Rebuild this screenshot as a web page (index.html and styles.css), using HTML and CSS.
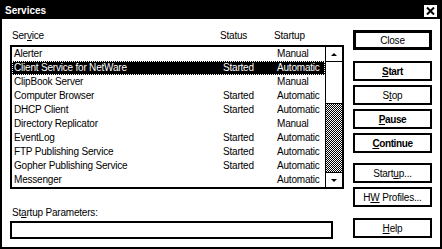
FILE: index.html
```html
<!DOCTYPE html>
<html lang="en">
<head>
    <meta charset="UTF-8">
    <meta name="viewport" content="width=device-width, initial-scale=1.0">
    <title>Services</title>
    <link rel="stylesheet" href="styles.css">
</head>
<body>
    <div class="window">
        <div class="titlebar">
            <span class="title">Services</span>
            <span class="close-box">
                <svg width="9" height="8" viewBox="0 0 9 8">
                    <path d="M1 0.5 L8 7.5 M8 0.5 L1 7.5" stroke="#000" stroke-width="2"/>
                </svg>
            </span>
        </div>

        <div class="content">
            <div class="main">
                <div class="header">
                    <span>Ser<u>v</u>ice</span>
                    <span>Status</span>
                    <span>Startup</span>
                </div>

                <div class="listbox">
                    <ul class="rows">
                        <li><span>Alerter</span><span></span><span>Manual</span></li>
                        <li class="selected"><span>Client Service for NetWare</span><span>Started</span><span>Automatic</span></li>
                        <li><span>ClipBook Server</span><span></span><span>Manual</span></li>
                        <li><span>Computer Browser</span><span>Started</span><span>Automatic</span></li>
                        <li><span>DHCP Client</span><span>Started</span><span>Automatic</span></li>
                        <li><span>Directory Replicator</span><span></span><span>Manual</span></li>
                        <li><span>EventLog</span><span>Started</span><span>Automatic</span></li>
                        <li><span>FTP Publishing Service</span><span>Started</span><span>Automatic</span></li>
                        <li><span>Gopher Publishing Service</span><span>Started</span><span>Automatic</span></li>
                        <li><span>Messenger</span><span></span><span>Automatic</span></li>
                    </ul>
                    <div class="scrollbar">
                        <div class="arrow"><span class="tri up"></span></div>
                        <div class="thumb"></div>
                        <div class="track"></div>
                        <div class="arrow down-box"><span class="tri down"></span></div>
                    </div>
                </div>

                <label class="param-label">St<u>a</u>rtup Parameters:</label>
                <div class="param-input"></div>
            </div>

            <div class="buttons">
                <button class="btn default">Close</button>
                <button class="btn bold first"><u>S</u>tart</button>
                <button class="btn">S<u>t</u>op</button>
                <button class="btn bold"><u>P</u>ause</button>
                <button class="btn bold"><u>C</u>ontinue</button>
                <button class="btn group">Start<u>u</u>p...</button>
                <button class="btn">H<u>W</u> Profiles...</button>
                <button class="btn last"><u>H</u>elp</button>
            </div>
        </div>
    </div>
</body>
</html>
```

FILE: styles.css
```css
body {
    margin: 0;
    padding: 0;
    background-color: #fff;
    font-family: 'Liberation Sans', Arial, sans-serif;
    font-size: 10px;
    letter-spacing: -0.2px;
    color: #000;
}

.window {
    width: 442px;
    height: 249px;
    box-sizing: border-box;
    border: 2px solid #000;
    background-color: #fff;
}

.titlebar {
    height: 17px;
    background-color: #000;
    color: #fff;
    display: flex;
    align-items: center;
    justify-content: space-between;
    padding: 0 3px 0 3px;
}

.title {
    font-weight: bold;
    font-size: 10px;
    letter-spacing: 0;
}

.close-box {
    width: 13px;
    height: 12px;
    background-color: #fff;
    display: flex;
    align-items: center;
    justify-content: center;
}

.close-box svg {
    display: block;
}

.content {
    display: flex;
}

.main {
    width: 334px;
    padding-left: 8px;
}

.header {
    display: grid;
    grid-template-columns: 208px 54px 1fr;
    height: 14px;
    line-height: 14px;
    margin-top: 10px;
    margin-bottom: 2px;
    padding-left: 2px;
}

.listbox {
    display: flex;
    height: 144px;
    box-sizing: border-box;
    border: 2px solid #000;
}

.rows {
    list-style-type: none;
    margin: 0;
    padding: 0;
    width: 315px;
}

.rows li {
    display: grid;
    grid-template-columns: 209px 54px 1fr;
    height: 14px;
    line-height: 14px;
    padding-left: 2px;
    white-space: nowrap;
    color: #000;
}

.rows li.selected {
    background-color: #000;
    color: #fff;
    outline: 1px dotted #fff;
    outline-offset: -1px;
}

.scrollbar {
    width: 16px;
    border-left: 1px solid #000;
    display: flex;
    flex-direction: column;
}

.arrow {
    height: 14px;
    border-bottom: 1px solid #000;
    display: flex;
    align-items: center;
    justify-content: center;
}

.arrow.down-box {
    border-bottom: none;
    border-top: 1px solid #000;
}

.tri {
    width: 0;
    height: 0;
    border-left: 3px solid transparent;
    border-right: 3px solid transparent;
}

.tri.up {
    border-bottom: 3px solid #000;
}

.tri.down {
    border-top: 3px solid #000;
}

.thumb {
    height: 41px;
    border-bottom: 1px solid #000;
    background-color: #fff;
}

.track {
    flex: 1;
    background: repeating-conic-gradient(#000 0 25%, #fff 0 50%) 0 0 / 2px 2px;
}

.param-label {
    display: block;
    height: 14px;
    line-height: 14px;
    margin-top: 17px;
    padding-left: 2px;
}

.param-input {
    width: 323px;
    height: 18px;
    box-sizing: border-box;
    border: 2px solid #000;
    margin-top: 1px;
}

.buttons {
    display: flex;
    flex-direction: column;
    gap: 4px;
    margin-left: 9px;
    padding-top: 11px;
    width: 79px;
}

.btn {
    height: 20px;
    width: 79px;
    box-sizing: border-box;
    border: 2px solid #000;
    background-color: #fff;
    font-family: 'Liberation Sans', Arial, sans-serif;
    font-size: 10px;
    letter-spacing: -0.2px;
    color: #000;
    padding: 0;
    margin: 0;
}

.btn.default {
    border-width: 3px;
}

.btn.bold {
    font-weight: bold;
    letter-spacing: -0.4px;
}

.btn.first {
    margin-top: 7px;
}

.btn.group {
    margin-top: 6px;
}

.btn.last {
    margin-top: 7px;
}
```
